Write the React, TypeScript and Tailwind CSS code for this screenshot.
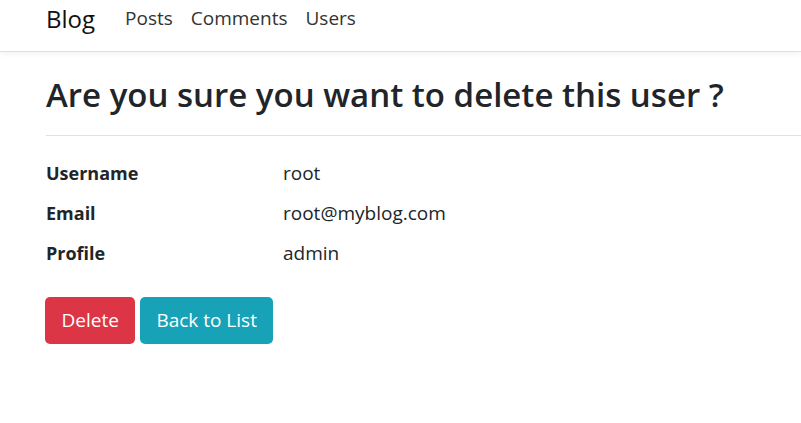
export default function App() {
  const rows = [
    { label: 'Username', value: 'root' },
    { label: 'Email', value: 'root@myblog.com' },
    { label: 'Profile', value: 'admin' },
  ]

  return (
    <div className="min-h-screen bg-white text-[#212529] font-['Open_Sans',sans-serif]">
      <header className="h-[52px] border-b border-[#dee2e6] shadow-[0_2px_6px_rgba(0,0,0,0.05)]">
        <nav className="flex items-center h-[37px] pl-[46px]">
          <span className="text-[24px] leading-none text-[#111] mr-[30px]">Blog</span>
          <div className="flex items-center gap-[18px] text-[19px] text-[#333]">
            <span>Posts</span>
            <span>Comments</span>
            <span>Users</span>
          </div>
        </nav>
      </header>

      <main className="pl-[46px]">
        <h2 className="mt-[21px] text-[33px] font-semibold leading-[44px]">
          Are you sure you want to delete this user ?
        </h2>
        <hr className="mt-[18px] border-t border-[#dee2e6]" />

        <dl className="mt-[24px] flex flex-col gap-[14px]">
          {rows.map((r) => (
            <div key={r.label} className="flex leading-[26px]">
              <dt className="w-[237px] text-[18px] font-bold">{r.label}</dt>
              <dd className="text-[19px]">{r.value}</dd>
            </div>
          ))}
        </dl>

        <div className="mt-[31px] -ml-px flex gap-[5px]">
          <button className="h-[47px] px-[16.5px] rounded-[5px] bg-[#dc3545] text-white text-[19px]">
            Delete
          </button>
          <button className="h-[47px] px-[16px] rounded-[5px] bg-[#17a2b8] text-white text-[19px]">
            Back to List
          </button>
        </div>
      </main>
    </div>
  )
}
